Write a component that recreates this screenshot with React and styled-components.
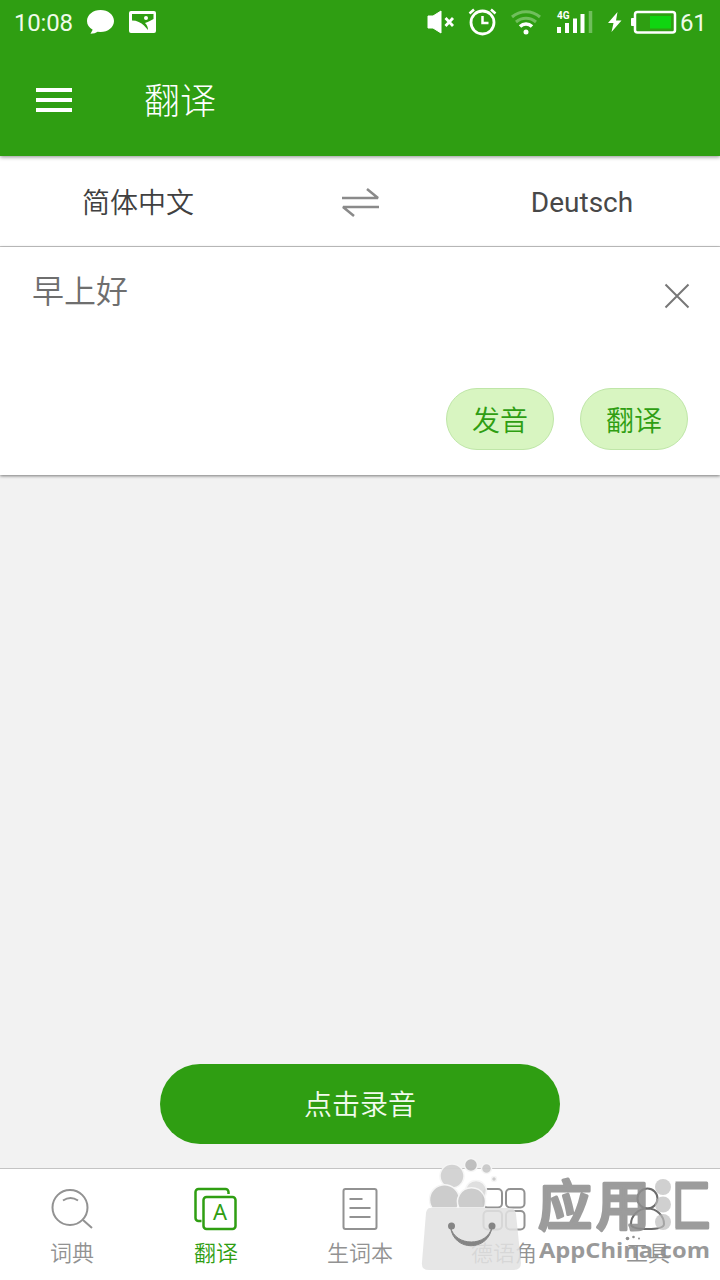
import React from "react";
import styled, { createGlobalStyle } from "styled-components";

const green = "#2f9e12";

const GlobalStyle = createGlobalStyle`
  * {
    box-sizing: border-box;
  }
  body {
    margin: 0;
    background: #f2f2f2;
    font-family: Roboto, "Noto Sans CJK SC", sans-serif;
    font-weight: 350;
  }
  svg {
    display: block;
    flex-shrink: 0;
  }
`;

const Screen = styled.div`
  position: relative;
  display: flex;
  flex-direction: column;
  width: 720px;
  height: 1280px;
  overflow: hidden;
`;

const Header = styled.header`
  height: 156px;
  background: ${green};
  color: #fff;
  box-shadow: 0 1px 4px rgba(0, 0, 0, 0.45);
  z-index: 1;
`;

const StatusBar = styled.div`
  display: flex;
  justify-content: space-between;
  height: 44px;
  padding: 0 12px 0 14px;
  font-size: 24px;
  font-weight: 400;
  line-height: 46px;
  color: #effbe9;
`;

const StatusText = styled.span`
  width: ${(props) => props.$width}px;
  letter-spacing: -0.2px;
  white-space: nowrap;
`;

const Spacer = styled.span`
  flex: 1;
`;

const TitleBar = styled.div`
  display: flex;
  align-items: center;
  height: 112px;
  padding-left: 36px;
`;

const MenuButton = styled.div`
  display: flex;
  flex-direction: column;
  gap: 6px;
  width: 36px;
  margin-right: 72px;
`;

const MenuLine = styled.span`
  height: 4px;
  background: #fff;
`;

const Title = styled.h1`
  margin: 3px 0 0;
  font-size: 36px;
  font-weight: 300;
  line-height: 40px;
`;

const Languages = styled.div`
  display: grid;
  grid-template-columns: 276px 1fr 276px;
  align-items: center;
  justify-items: center;
  height: 91px;
  padding-top: 2px;
  background: #fff;
  border-bottom: 1px solid #c8c8c8;
  font-size: 28px;
  line-height: 40px;
`;

const Language = styled.span`
  padding-top: ${(props) => (props.$latin ? "2px" : "4px")};
  color: ${(props) => (props.$latin ? "#484848" : "#404040")};
  font-weight: ${(props) => (props.$latin ? 400 : 350)};
`;

const InputPanel = styled.section`
  display: flex;
  flex-direction: column;
  justify-content: space-between;
  height: 228px;
  padding: 25px 32px 25px;
  background: #fff;
  box-shadow: 0 1px 3px rgba(0, 0, 0, 0.5);
`;

const InputRow = styled.div`
  display: flex;
  justify-content: space-between;
  color: #6e6e6e;
  font-size: 32px;
  line-height: 40px;

  svg {
    margin: 11px -2px 0 0;
  }
`;

const Actions = styled.div`
  display: flex;
  justify-content: flex-end;
  gap: 26px;
`;

const Chip = styled.div`
  width: 108px;
  height: 62px;
  border: 1px solid #bfe6a8;
  border-radius: 31px;
  background: #d8f5c1;
  color: ${green};
  font-size: 28px;
  line-height: 65px;
  text-align: center;
`;

const Results = styled.main`
  display: flex;
  flex: 1;
  align-items: flex-end;
  justify-content: center;
  padding-bottom: 24px;
`;

const RecordButton = styled.div`
  width: 400px;
  height: 80px;
  border-radius: 40px;
  background: ${green};
  color: #f2fbee;
  font-size: 28px;
  line-height: 84px;
  text-align: center;
`;

const TabBar = styled.nav`
  display: grid;
  grid-template-columns: repeat(5, 1fr);
  height: 112px;
  background: #fff;
  border-top: 1px solid #c4c4c4;
`;

const Tab = styled.div`
  display: flex;
  flex-direction: column;
  align-items: center;
  padding-top: 18px;
  color: ${(props) => (props.$active ? green : "#929292")};
  font-size: 22px;
  line-height: 30px;

  svg {
    margin-bottom: 8px;
  }
`;

// the store mark lies over the right half of the tab bar
const Watermark = styled.div`
  position: absolute;
  right: 0;
  bottom: 0;
  display: flex;
  width: 300px;
  height: 124px;
`;

const StatusIconsLeft = () => (
  <svg width="90" height="44" fill="#fff">
    <path d="M27.500 10c7.600 0 13.500 4.800 13.500 11S35.100 32 27.500 32l-3-.3c-1.500 1.300-4 2-7 2l2.200-4c-3.600-2-5.700-5-5.700-8.700 0-6.200 6-11 13.500-11z" />
    <path
      fillRule="evenodd"
      d="M58 11h23a2 2 0 0 1 2 2v18a2 2 0 0 1-2 2H58a2 2 0 0 1-2-2V13a2 2 0 0 1 2-2zm1 3v6.500c5 0 9 2 12 5l4 4.500c0-3-1-5-3-7 4-1 6-3 8.500-4v-5z"
    />
    <circle cx="73" cy="18" r="2" />
  </svg>
);

const StatusIconsRight = () => (
  <svg width="259" height="44" fill="none" stroke="#fff">
    <path d="M7 16h5l8-5v22l-8-5H7z" fill="#fff" stroke="#fff" />
    <path d="m24.500 18 7.500 8m0-8-7.500 8" strokeWidth="2.800" />
    <circle cx="61.500" cy="22.500" r="11.500" strokeWidth="2.800" />
    <path d="M61.500 16v7h6M48.500 13.500l4.500-4m21.500 4-4.500-4" strokeWidth="2.500" />
    <g strokeWidth="3.500">
      <path d="M91 17c8-7 20-7 28 0" stroke="#70be5c" strokeWidth="3" />
      <path d="M95 22c6-5 14-5 20 0" stroke="#70be5c" strokeWidth="3" />
      <path d="M99 26.500c3.500-3.300 8.500-3.300 12 0" />
    </g>
    <circle cx="105" cy="32" r="2.500" fill="#fff" stroke="none" />
    <text x="136" y="19" fill="#fff" stroke="none" fontSize="10" fontWeight="700">
      4G
    </text>
    <path d="M138 27v6M146 23v10M154 18.500v14.500M161.500 14v19" strokeWidth="4" />
    <path d="M169.500 11v22" stroke="#70be5c" strokeWidth="3.500" />
    <path d="m196.500 12-9.500 11h5.500l-2 9 10-11.500h-5.500z" fill="#fff" stroke="none" />
    <rect x="214" y="12" width="40" height="20.500" rx="2.500" strokeWidth="2.500" />
    <path d="M213 18.500h-2.500v7h2.500" fill="#fff" strokeWidth="1" />
    <path d="M229 16h21v12.500h-21z" fill="#10d510" stroke="none" />
  </svg>
);

const SwapIcon = () => (
  <svg width="40" height="32" fill="none" stroke="#8a8a8a" strokeWidth="2.500">
    <path d="M2 12h36L27 3M39 21H3l11 9" strokeLinejoin="bevel" />
  </svg>
);

const CloseIcon = () => (
  <svg width="26" height="26" stroke="#777" strokeWidth="2">
    <path d="m1.500 1.500 23 23m0-23-23 23" />
  </svg>
);

const TabIcon = ({ children }) => (
  <svg width="44" height="44" fill="none" stroke="currentColor" strokeWidth="2">
    {children}
  </svg>
);

const tabs = [
  {
    label: "词典",
    icon: (
      <>
        <circle cx="20" cy="20.500" r="17.500" />
        <path d="M13 13.500q7.500-5 15 0M33 33l9 8" />
      </>
    ),
  },
  {
    label: "翻译",
    active: true,
    icon: (
      <>
        <path d="M7.500 34H4.500a3 3 0 0 1-3-3V5a3 3 0 0 1 3-3h27a3 3 0 0 1 3 3v2" strokeWidth="2.500" />
        <rect x="9.500" y="10" width="32" height="32" rx="3" strokeWidth="2.500" />
        <text
          x="26"
          y="33"
          fill="currentColor"
          stroke="none"
          fontFamily="Noto Sans, sans-serif"
          fontSize="22"
          fontWeight="400"
          textAnchor="middle"
        >
          A
        </text>
      </>
    ),
  },
  {
    label: "生词本",
    icon: (
      <>
        <rect x="5.500" y="2" width="33" height="40" rx="2" />
        <path d="M11.500 12h13M11.500 21h21M11.500 30h21" />
      </>
    ),
  },
  {
    label: "德语角",
    icon: (
      <>
        <rect x="1.500" y="2" width="18.500" height="18.500" rx="4" />
        <rect x="24" y="2" width="18.500" height="18.500" rx="4" />
        <rect x="1.500" y="24" width="18.500" height="18.500" rx="4" />
        <rect x="24" y="24" width="18.500" height="18.500" rx="4" />
      </>
    ),
  },
  {
    label: "工具",
    icon: (
      <g stroke="#6c6c6c">
        <circle cx="21.500" cy="11.500" r="10" />
        <path d="M5 37c0-8 7-15.500 16.500-15.500S38 29 38 37c0 3-5 5-16.500 5S5 40 5 37z" />
      </g>
    ),
  },
];

const BagIcon = () => (
  <svg width="102" height="124">
    <g fill="#c9c9c9" stroke="#f6f6f6" strokeWidth="1.500" opacity="0.940">
      <circle cx="32" cy="20" r="12" fill="#d1d1d1" />
      <circle cx="51" cy="9" r="6.500" fill="#bcbcbc" />
      <circle cx="66.500" cy="12.500" r="5" />
      <circle cx="74" cy="23" r="2.500" />
      <circle cx="56" cy="35" r="10.500" fill="#dedede" />
      <path d="M12 52a15 15 0 1 1 25 0z" />
      <path d="M39 52a14 14 0 1 1 25 0z" />
    </g>
    <path
      d="M10 52h80q5 0 6 6l5 49q0 7-7 7H9q-8 0-7-8l4-49q1-5 4-5z"
      fill="#e2e2e2"
      opacity="0.860"
    />
    <path d="M30.500 71c3 25 38 25 41.500 0-4.500 20-37 20-41.500 0z" fill="#858585" stroke="#858585" />
    <circle cx="31.500" cy="70" r="3.500" fill="#858585" />
    <circle cx="72" cy="70" r="3.500" fill="#858585" />
  </svg>
);

const Brand = () => (
  <svg width="198" height="124" fill="#8f8f8f">
    <defs>
      <clipPath id="box">
        <path d="M153.500 0h44v90h-44z" />
      </clipPath>
    </defs>
    <g
      fontFamily="Noto Sans CJK SC, sans-serif"
      fontSize="54"
      fontWeight="500"
      stroke="#8f8f8f"
      strokeWidth="3"
      strokeLinejoin="round"
      opacity="0.880"
    >
      <text x="16" y="70">
        应
      </text>
      <text x="74" y="70">
        用
      </text>
      <text x="134" y="70" clipPath="url(#box)">
        汇
      </text>
    </g>
    <g fill="#bdbdbd" opacity="0.700">
      <circle cx="141" cy="31" r="8" />
      <circle cx="141" cy="48.500" r="8" />
      <circle cx="141" cy="66" r="8" />
    </g>
    <circle cx="105.500" cy="82.500" r="1.800" />
    <circle cx="111.500" cy="81" r="1.300" />
    <circle cx="117" cy="82.500" r="1" />
    <text
      x="17"
      y="101.500"
      fontFamily="Open Sans, sans-serif"
      fontSize="22"
      fontWeight="700"
      textLength="171"
      lengthAdjust="spacingAndGlyphs"
      opacity="0.900"
    >
      AppChina.com
    </text>
  </svg>
);

const App = () => {
  return (
    <Screen>
      <GlobalStyle />
      <Header>
        <StatusBar>
          <StatusText $width={59}>10:08</StatusText>
          <StatusIconsLeft />
          <Spacer />
          <StatusIconsRight />
          <StatusText $width={28}>61</StatusText>
        </StatusBar>
        <TitleBar>
          <MenuButton>
            <MenuLine />
            <MenuLine />
            <MenuLine />
          </MenuButton>
          <Title>翻译</Title>
        </TitleBar>
      </Header>
      <Languages>
        <Language>简体中文</Language>
        <SwapIcon />
        <Language $latin>Deutsch</Language>
      </Languages>
      <InputPanel>
        <InputRow>
          <span>早上好</span>
          <CloseIcon />
        </InputRow>
        <Actions>
          <Chip>发音</Chip>
          <Chip>翻译</Chip>
        </Actions>
      </InputPanel>
      <Results>
        <RecordButton>点击录音</RecordButton>
      </Results>
      <TabBar>
        {tabs.map((tab) => (
          <Tab key={tab.label} $active={tab.active}>
            <TabIcon>{tab.icon}</TabIcon>
            {tab.label}
          </Tab>
        ))}
      </TabBar>
      <Watermark>
        <BagIcon />
        <Brand />
      </Watermark>
    </Screen>
  );
};

export default App;
